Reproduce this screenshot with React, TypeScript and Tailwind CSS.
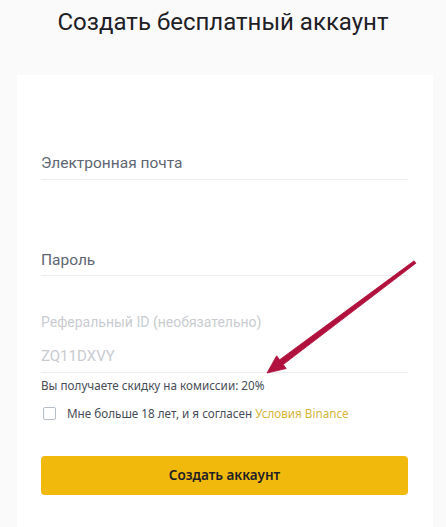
import React from 'react';

const Field: React.FC<{ label: string; className?: string }> = ({ label, className }) => (
  <div className={`border-b border-[#eaecef] ${className ?? ''}`}>
    <span className="block text-[15.5px] leading-[18px] text-[#5e6673] font-['Roboto',sans-serif]">{label}</span>
  </div>
);

// red annotation arrow drawn over the form
const Arrow: React.FC = () => (
  <svg className="absolute left-0 top-0 pointer-events-none" width="446" height="527" viewBox="0 0 446 527">
    <path
      d="M414.1 260.8 L415.9 263.2 L283.2 364.6 L286.2 368.6 L267 373 L276.6 355.8 L279.6 359.8 Z"
      fill="#b1113d"
      stroke="#b1113d"
      strokeWidth="0.8"
      strokeLinejoin="round"
    />
  </svg>
);

export default function App() {
  return (
    <div className="relative w-[446px] h-[527px] overflow-hidden bg-[#fafafa] font-['Noto_Sans',sans-serif]">
      <h1 className="pt-[5px] h-[75px] text-center text-[24px] leading-[34px] text-[#1e2026] font-normal font-['Roboto',sans-serif]">
        Создать бесплатный аккаунт
      </h1>

      <div className="ml-[17px] w-[416px] h-[460px] bg-white pl-[24px] pr-[25px] pt-[79px]">
        <Field label="Электронная почта" className="pb-[7px]" />
        <Field label="Пароль" className="mt-[71px] pb-[6px]" />

        <div className="mt-[37px] border-b border-[#eaecef] pb-[6px]">
          <span className="block text-[14px] leading-[18px] text-[#c9ccd1] font-['Roboto',sans-serif]">
            Реферальный ID (необязательно)
          </span>
          <span className="mt-[15px] block text-[15px] leading-[20px] text-[#c9ccd1] font-['Roboto',sans-serif]">
            ZQ11DXVY
          </span>
        </div>
        <p className="mt-[4px] text-[11.7px] leading-[16px] text-[#474d57]">
          Вы получаете скидку на комиссии: 20%
        </p>

        <label className="mt-[12px] flex items-center gap-[11px]">
          <span className="ml-[2px] w-[13px] h-[13px] rounded-[2px] border border-[#b7bdc6] bg-white" />
          <span className="text-[11.7px] leading-[16px] text-[#474d57]">
            Мне больше 18 лет, и я согласен <span className="text-[#d6b43a]">Условия Binance</span>
          </span>
        </label>

        <button className="mt-[35px] w-full h-[39px] rounded-[4px] bg-[#f0b90b] text-[13.5px] font-semibold text-[#1e2026]">
          Создать аккаунт
        </button>
      </div>

      <Arrow />
    </div>
  );
}
